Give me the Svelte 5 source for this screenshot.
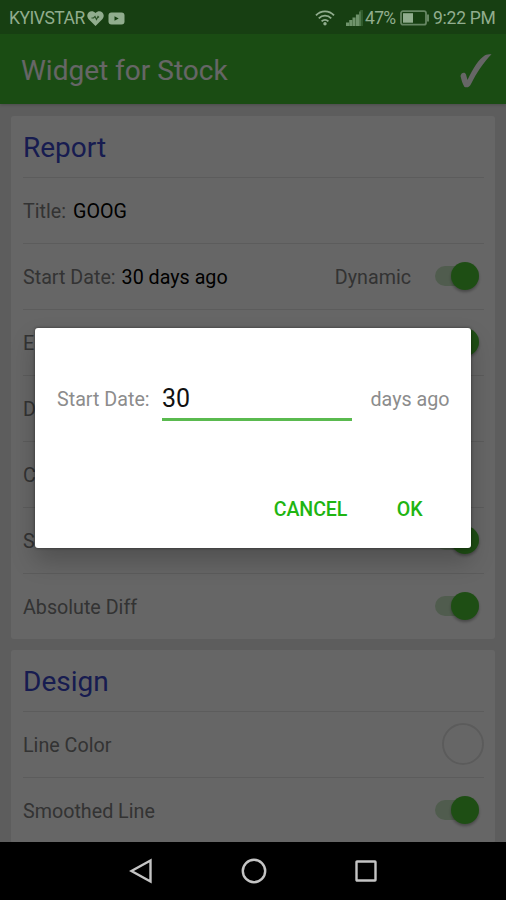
<script lang="ts">
	type Row = {
		label: string;
		value?: string;
		note?: string;
		control?: 'switch' | 'color';
	};

	type Section = {
		title: string;
		rows: Row[];
	};

	const sections: Section[] = [
		{
			title: 'Report',
			rows: [
				{ label: 'Title:', value: 'GOOG' },
				{ label: 'Start Date:', value: '30 days ago', note: 'Dynamic', control: 'switch' },
				{ label: 'E', control: 'switch' },
				{ label: 'D' },
				{ label: 'C' },
				{ label: 'S', control: 'switch' },
				{ label: 'Absolute Diff', control: 'switch' }
			]
		},
		{
			title: 'Design',
			rows: [
				{ label: 'Line Color', control: 'color' },
				{ label: 'Smoothed Line', control: 'switch' }
			]
		}
	];

	let days = $state('30');
	let open = $state(true);

	function close() {
		open = false;
	}
</script>

<div class="phone">
	<header class="status">
		<span class="carrier">KYIVSTAR</span>
		<svg class="heart" width="17" height="15" viewBox="0 0 17 15">
			<path d="M8.5 15 1.5 8C-2.5 3 4-2.5 8.5 2 13-2.5 19.5 3 15.5 8Z" fill="currentColor" />
			<path d="M4.500 7h2l1.500-1.500 1.500 3 1.500-3 1 1" fill="none" stroke="#2b5226" stroke-width="1.1" />
		</svg>
		<svg class="video" width="17" height="13" viewBox="0 0 17 13">
			<rect x="0.5" y="0.5" width="16" height="12" rx="3" fill="currentColor" />
			<path d="M6.500 4.300v4.400l4.200-2.200z" fill="#173f12" />
		</svg>
		<span class="spacer"></span>
		<svg class="wifi" width="20" height="16" viewBox="0 0 20 16">
			<g fill="none" stroke="currentColor" stroke-width="1.9">
				<path d="M1 5.300C6 0 14 0 19 5.300" />
				<path d="M3.800 8.400c3.500-3.700 8.900-3.700 12.400 0" />
				<path d="M6.600 11.400c2-2 4.800-2 6.800 0" />
			</g>
			<circle cx="10" cy="13.800" r="1.700" fill="currentColor" />
		</svg>
		<svg class="signal" width="17" height="16" viewBox="0 0 17 16">
			<path d="M14 0h3v16h-3z" fill="#2f5a2b" />
			<path d="M0 12.500h3V16H0zM3.200 10h3v6h-3zM6.500 7.500h3V16h-3zM9.900 4.500h3.200V16H9.900z" fill="#6f936b" />
			<path d="M13.300 1.500h1.200V16h-1.200z" fill="#6f936b" />
		</svg>
		<span class="percent">47%</span>
		<svg class="battery" width="30" height="16" viewBox="0 0 30 16">
			<rect x="1" y="1.200" width="25" height="13.500" rx="2" fill="none" stroke="#668663" stroke-width="1.8" />
			<rect x="3" y="3.200" width="10" height="9.500" fill="currentColor" />
			<path d="M27 4.500h2v7h-2z" fill="#668663" />
		</svg>
		<span class="clock">9:22 PM</span>
	</header>

	<main class="app">
		<div class="toolbar">
			<h1>Widget for Stock</h1>
			<svg width="32" height="34" viewBox="0 0 32 34">
				<path d="M0.500 22C1 18.500 5 17.500 6 20.500L7.500 26C13 14 19 5 25 1.200 27 0.300 30 0 31.500 0.200 23 9 17 18 11 30 9.500 33.500 7 33.700 4.500 33 2.500 30 1.500 26 0.500 22Z" fill="#fff" />
			</svg>
		</div>

		<div class="list">
			{#each sections as section}
				<section class="card">
					<h2>{section.title}</h2>
					{#each section.rows as row}
						<div class="row">
							<span class="label">{row.label}</span>
							{#if row.value}
								<span class="value" class:value--wide={row.label === 'Title:'}>{row.value}</span>
							{/if}
							<span class="spacer"></span>
							{#if row.note}
								<span class="note">{row.note}</span>
							{/if}
							{#if row.control === 'switch'}
								<span class="switch"><span class="thumb"></span></span>
							{:else if row.control === 'color'}
								<span class="swatch"></span>
							{/if}
						</div>
					{/each}
				</section>
			{/each}
		</div>

		{#if open}
			<div class="scrim">
				<div class="dialog" role="dialog" aria-modal="true">
					<div class="field">
						<label for="days">Start Date:</label>
						<input id="days" bind:value={days} inputmode="numeric" />
						<span class="unit">days ago</span>
					</div>
					<div class="actions">
						<button onclick={close}>CANCEL</button>
						<button onclick={close}>OK</button>
					</div>
				</div>
			</div>
		{/if}
	</main>

	<nav class="navbar">
		<svg width="24" height="26" viewBox="0 0 24 26">
			<path d="M21.500 2.500v21L2.500 13z" />
		</svg>
		<svg width="26" height="26" viewBox="0 0 26 26">
			<circle cx="13" cy="13" r="11.200" />
		</svg>
		<svg width="22" height="22" viewBox="0 0 22 22">
			<rect x="1.500" y="1.500" width="19" height="19" rx="0.500" />
		</svg>
	</nav>
</div>

<style>
	:global(body) {
		margin: 0;
		background: #000;
	}

	.phone {
		width: 506px;
		height: 900px;
		display: flex;
		flex-direction: column;
		overflow: hidden;
		font-family: Roboto, 'Liberation Sans', sans-serif;
	}

	.status {
		height: 34px;
		flex: none;
		display: flex;
		align-items: center;
		box-sizing: border-box;
		padding: 2px 11px 0 9px;
		background: #173f12;
		color: #91ad8e;
		font-size: 17.5px;
		white-space: nowrap;
	}

	.status svg {
		flex: none;
	}

	.carrier {
		width: 77px;
		letter-spacing: -0.5px;
	}

	.heart {
		margin-left: 1px;
	}

	.video {
		margin-left: 4px;
	}

	.spacer {
		flex: 1;
	}

	.signal {
		margin-left: 11px;
	}

	.percent {
		width: 33px;
		margin-left: 2px;
		letter-spacing: -0.7px;
	}

	.battery {
		margin-left: 2px;
	}

	.clock {
		width: 62px;
		margin-left: 3px;
		letter-spacing: -0.25px;
	}

	.app {
		position: relative;
		flex: 1;
		min-height: 0;
		overflow: hidden;
		background: #e8e8e8;
	}

	.toolbar {
		height: 70px;
		box-sizing: border-box;
		padding: 3px 14px 0 21px;
		display: flex;
		align-items: center;
		justify-content: space-between;
		background: #42be31;
		color: #fff;
		box-shadow: 0 1px 3px rgba(0, 0, 0, 0.2);
	}

	h1 {
		margin: 0;
		font-size: 28px;
		font-weight: 400;
		line-height: 34px;
	}

	.list {
		display: flex;
		flex-direction: column;
		gap: 11px;
		padding: 12px 11px 0;
	}

	.card {
		padding: 0 11px 0 12px;
		border-radius: 3px;
		background: #fff;
	}

	h2 {
		height: 61px;
		margin: 0;
		font-size: 28px;
		font-weight: 400;
		line-height: 63px;
		color: #3b48c8;
	}

	.row {
		height: 66px;
		box-sizing: border-box;
		display: flex;
		align-items: center;
		border-top: 1px solid #e6e6e6;
		font-size: 19.7px;
		color: #808080;
	}

	.label,
	.value,
	.note {
		padding-top: 2px;
	}

	.value {
		margin-left: 6px;
		color: #000;
	}

	.value--wide {
		margin-left: 7px;
	}

	.note {
		margin-right: 24px;
	}

	.switch {
		display: flex;
		justify-content: flex-end;
		align-items: center;
		width: 44px;
		height: 20px;
		margin: -1px 5px 0 0;
		border-radius: 10px;
		background: #c8e6c3;
	}

	.thumb {
		flex: none;
		width: 28px;
		height: 28px;
		border-radius: 50%;
		background: #4cc433;
		box-shadow: 0 2px 3px rgba(0, 0, 0, 0.3);
	}

	.swatch {
		width: 38px;
		height: 38px;
		margin-top: -1px;
		border: 2px solid #e4e4e4;
		border-radius: 50%;
	}

	.scrim {
		position: absolute;
		inset: 0;
		display: flex;
		flex-direction: column;
		align-items: center;
		background: rgba(0, 0, 0, 0.6);
	}

	.dialog {
		width: 436px;
		height: 220px;
		box-sizing: border-box;
		margin-top: 293.5px;
		border-radius: 3px;
		background: #fff;
		box-shadow:
			0 0 3px rgba(0, 0, 0, 0.5),
			0 13px 24px rgba(0, 0, 0, 0.22);
	}

	.field {
		display: flex;
		align-items: center;
		padding: 46px 21px 0 22px;
		color: #8c8c8c;
		font-size: 19.7px;
		white-space: nowrap;
	}

	.field label,
	.unit {
		padding-top: 5px;
	}

	.field label {
		width: 105px;
	}

	.field input {
		width: 190px;
		height: 47px;
		box-sizing: border-box;
		padding: 6px 0 0;
		border: none;
		border-bottom: 3px solid #5aba4f;
		border-radius: 0;
		outline: none;
		background: none;
		color: #111;
		font: 25px Roboto, 'Liberation Sans', sans-serif;
	}

	.unit {
		margin-left: 18.5px;
	}

	.actions {
		display: flex;
		justify-content: flex-end;
		gap: 49.5px;
		padding: 77px 48.5px 0 0;
	}

	button {
		padding: 0;
		border: none;
		background: none;
		color: #1fb512;
		font: 500 19.6px/23px Roboto, 'Liberation Sans', sans-serif;
		letter-spacing: -0.1px;
	}

	.navbar {
		height: 58px;
		flex: none;
		display: flex;
		align-items: center;
		justify-content: center;
		gap: 88px;
		background: #000;
	}

	.navbar svg {
		fill: none;
		stroke: #c4c4c4;
		stroke-width: 2.4;
	}
</style>
